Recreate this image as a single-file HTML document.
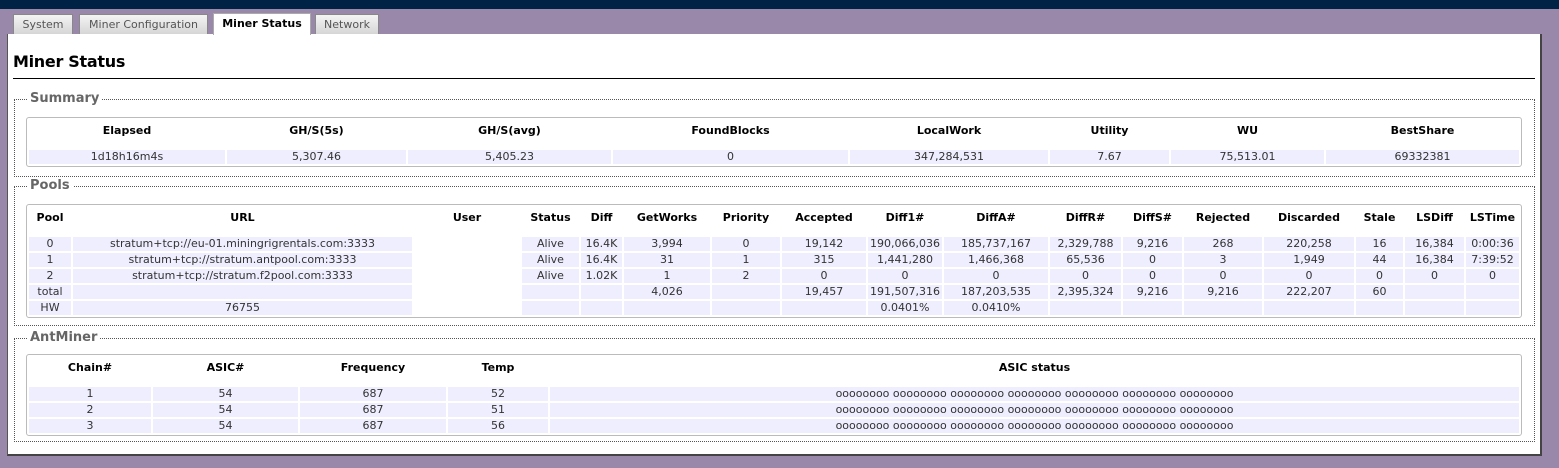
<!DOCTYPE html>
<html><head><meta charset="utf-8"><style>
*{margin:0;padding:0;box-sizing:border-box}
body{width:1559px;height:468px;background:#9a88aa;font-family:"DejaVu Sans","Liberation Sans",sans-serif;font-size:11px;color:#333;position:relative;overflow:hidden}
.top{position:absolute;left:0;top:0;width:1559px;height:9px;background:#002244}
.tab{position:absolute;top:14px;height:21px;border:1px solid #888;border-bottom:none;background:linear-gradient(#f4f4f4,#d4d4d4);color:#555;font-size:11px;line-height:19px;text-align:center}
.tab.act{background:#fff;color:#000;font-weight:bold;top:13px;height:22px}
.main{position:absolute;left:7px;top:34px;width:1535px;height:422px;background:#fff;border-right:2px solid #444;border-bottom:2px solid #444;border-left:1px solid #555}
h2{position:absolute;left:13px;top:52px;font-size:16px;font-weight:bold;color:#000;font-family:"DejaVu Sans",sans-serif;letter-spacing:-0.3px}
.hr{position:absolute;left:13px;top:78px;width:1522px;height:1px;background:#000}
.fs{position:absolute;left:14px;width:1521px;border:1px dotted #555}
.lg{position:absolute;left:12px;top:-9px;background:#fff;padding:0 3px;font-size:13px;font-weight:bold;color:#666}
table{position:absolute;left:26px;width:1496px;border:1px solid #bbb;border-radius:3px;border-spacing:2px;table-layout:fixed}
th{font-weight:bold;color:#000;height:28px;font-size:11px;text-align:center;vertical-align:top;padding-top:4px;white-space:nowrap}
td{background:#eeeeff;height:14px;text-align:center;line-height:14px;padding:0;white-space:nowrap;overflow:hidden}
td.w{background:#fff}
</style></head><body>
<div class="top"></div>
<div class="tab" style="left:13px;width:60px">System</div>
<div class="tab" style="left:79px;width:129px">Miner Configuration</div>
<div class="tab" style="left:315px;width:64px">Network</div>
<div class="main"></div>
<div class="tab act" style="left:213px;width:98px;border-color:#aaa">Miner Status</div>
<h2>Miner Status</h2>
<div class="hr"></div>

<div class="fs" style="top:99px;height:78px"><div class="lg">Summary</div></div>
<table style="top:117px">
<colgroup><col style="width:196px"><col style="width:179px"><col style="width:203px"><col style="width:235px"><col style="width:198px"><col style="width:119px"><col style="width:153px"><col></colgroup>
<tr><th>Elapsed</th><th>GH/S(5s)</th><th>GH/S(avg)</th><th>FoundBlocks</th><th>LocalWork</th><th>Utility</th><th>WU</th><th>BestShare</th></tr>
<tr><td>1d18h16m4s</td><td>5,307.46</td><td>5,405.23</td><td>0</td><td>347,284,531</td><td>7.67</td><td>75,513.01</td><td>69332381</td></tr>
</table>

<div class="fs" style="top:186px;height:140px"><div class="lg">Pools</div></div>
<table style="top:204px">
<colgroup><col style="width:42px"><col style="width:339px"><col style="width:106px"><col style="width:57px"><col style="width:41px"><col style="width:86px"><col style="width:68px"><col style="width:84px"><col style="width:74px"><col style="width:104px"><col style="width:71px"><col style="width:59px"><col style="width:78px"><col style="width:90px"><col style="width:47px"><col style="width:59px"><col></colgroup>
<tr><th>Pool</th><th>URL</th><th>User</th><th>Status</th><th>Diff</th><th>GetWorks</th><th>Priority</th><th>Accepted</th><th>Diff1#</th><th>DiffA#</th><th>DiffR#</th><th>DiffS#</th><th>Rejected</th><th>Discarded</th><th>Stale</th><th>LSDiff</th><th>LSTime</th></tr>
<tr><td>0</td><td>stratum+tcp://eu-01.miningrigrentals.com:3333</td><td class="w"></td><td>Alive</td><td>16.4K</td><td>3,994</td><td>0</td><td>19,142</td><td>190,066,036</td><td>185,737,167</td><td>2,329,788</td><td>9,216</td><td>268</td><td>220,258</td><td>16</td><td>16,384</td><td>0:00:36</td></tr>
<tr><td>1</td><td>stratum+tcp://stratum.antpool.com:3333</td><td class="w"></td><td>Alive</td><td>16.4K</td><td>31</td><td>1</td><td>315</td><td>1,441,280</td><td>1,466,368</td><td>65,536</td><td>0</td><td>3</td><td>1,949</td><td>44</td><td>16,384</td><td>7:39:52</td></tr>
<tr><td>2</td><td>stratum+tcp://stratum.f2pool.com:3333</td><td class="w"></td><td>Alive</td><td>1.02K</td><td>1</td><td>2</td><td>0</td><td>0</td><td>0</td><td>0</td><td>0</td><td>0</td><td>0</td><td>0</td><td>0</td><td>0</td></tr>
<tr><td>total</td><td></td><td class="w"></td><td></td><td></td><td>4,026</td><td></td><td>19,457</td><td>191,507,316</td><td>187,203,535</td><td>2,395,324</td><td>9,216</td><td>9,216</td><td>222,207</td><td>60</td><td></td><td></td></tr>
<tr><td>HW</td><td>76755</td><td class="w"></td><td></td><td></td><td></td><td></td><td></td><td>0.0401%</td><td>0.0410%</td><td></td><td></td><td></td><td></td><td></td><td></td><td></td></tr>
</table>

<div class="fs" style="top:338px;height:104px"><div class="lg">AntMiner</div></div>
<table style="top:354px">
<colgroup><col style="width:122px"><col style="width:145px"><col style="width:146px"><col style="width:100px"><col></colgroup>
<tr><th>Chain#</th><th>ASIC#</th><th>Frequency</th><th>Temp</th><th>ASIC status</th></tr>
<tr><td>1</td><td>54</td><td>687</td><td>52</td><td>oooooooo oooooooo oooooooo oooooooo oooooooo oooooooo oooooooo</td></tr>
<tr><td>2</td><td>54</td><td>687</td><td>51</td><td>oooooooo oooooooo oooooooo oooooooo oooooooo oooooooo oooooooo</td></tr>
<tr><td>3</td><td>54</td><td>687</td><td>56</td><td>oooooooo oooooooo oooooooo oooooooo oooooooo oooooooo oooooooo</td></tr>
</table>
</body></html>
